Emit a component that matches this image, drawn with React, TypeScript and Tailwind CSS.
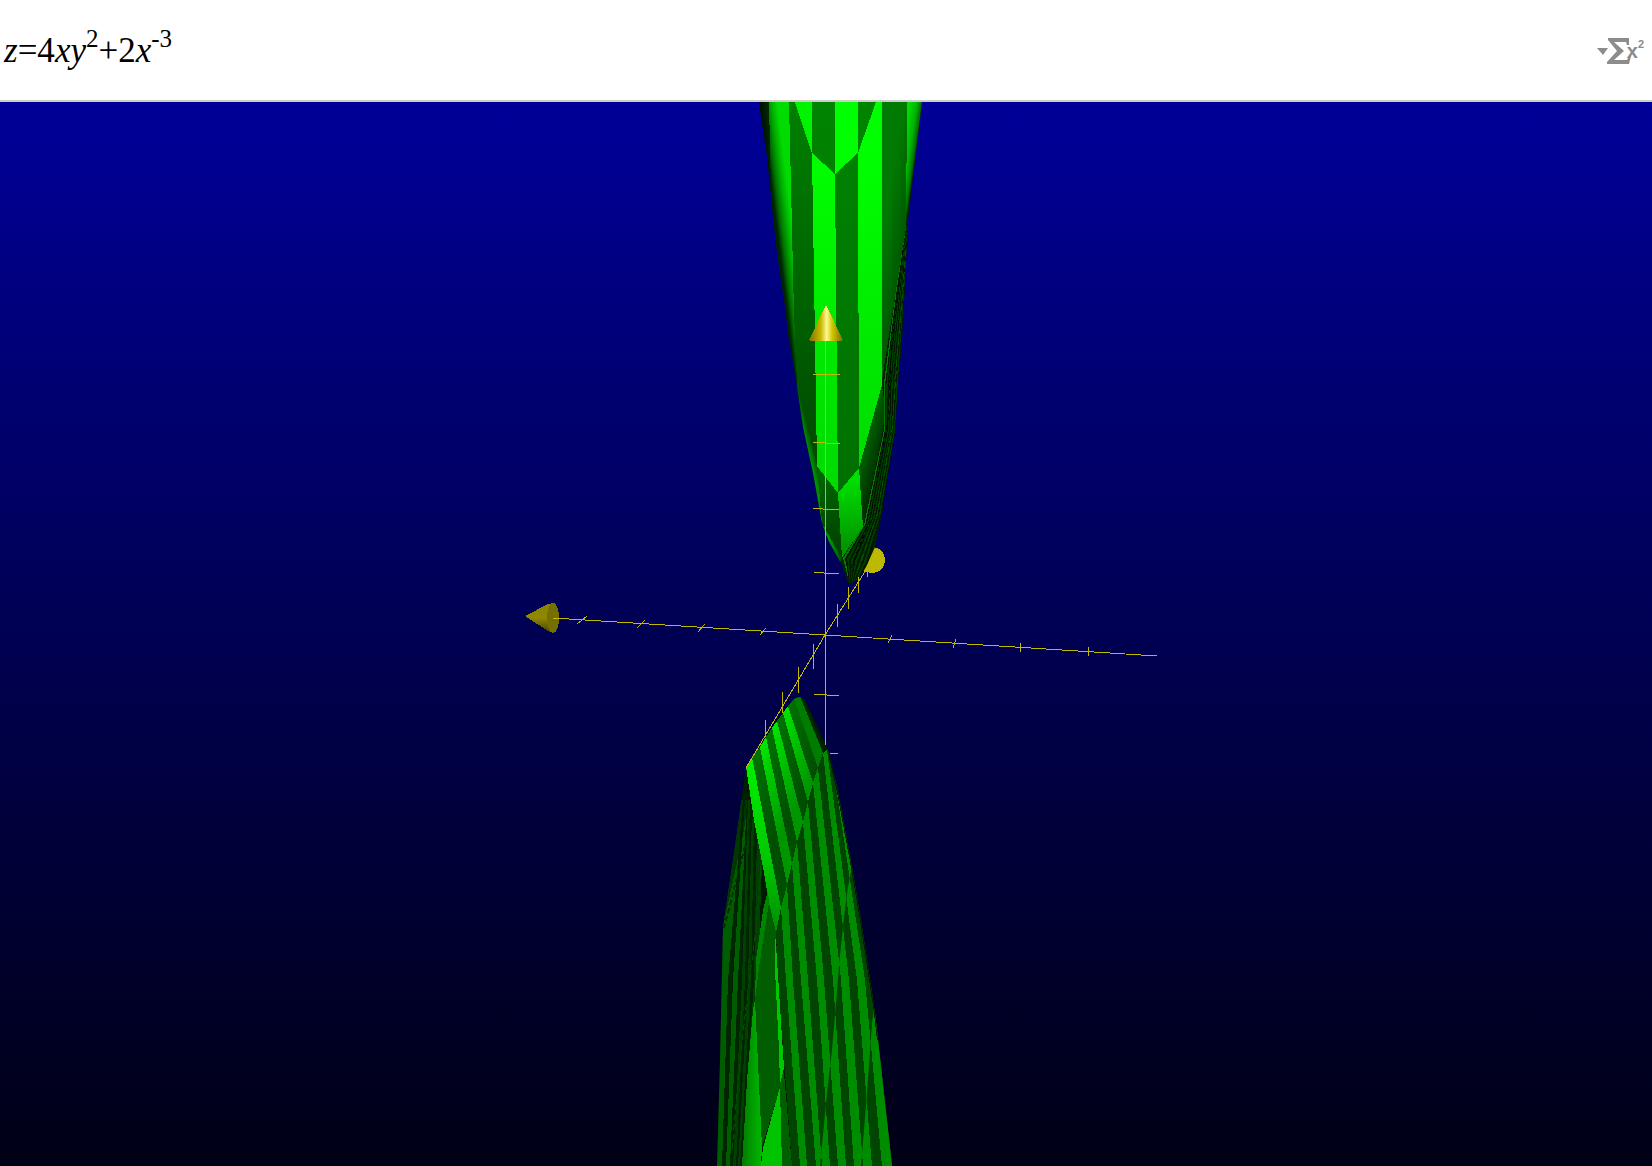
import React from "react";

type Pt = [number, number];

const pts = (list: Pt[]) => list.map((p) => p.join(",")).join(" ");

const BRIGHT = "#008c00";
const DARK = "#004600";

const UPPER: Pt[] = [
  [759, 102], [767, 155], [772, 205], [777, 252], [786, 313], [788, 333], [796, 380],
  [803, 427], [813, 473], [822, 523], [828, 540], [842, 565], [848, 583], [853, 583],
  [860, 577], [866, 567], [875, 547], [882, 513], [888, 473], [895, 433], [898, 383],
  [902, 340], [905, 285], [908, 218], [922, 102],
];

const LOWER: Pt[] = [
  [796, 698], [800, 697], [805, 700], [825, 743], [829, 753], [837, 787], [852, 867], [862, 927],
  [875, 1013], [885, 1103], [892, 1166], [717, 1166], [720, 1060], [723, 927], [736, 840],
  [746, 767], [765, 737], [782, 713], [794, 699],
];

/* Shaded underside of the upper sheet: left and right rims of the fan of strips. */
const rimLeft: Pt[] = [[906, 227], [896, 290], [884, 383], [884, 430], [864, 525], [843, 558], [848, 578]];
const rimRight: Pt[] = [[909, 218], [905, 290], [899, 383], [896, 430], [882, 513], [868, 563], [856, 583]];
const FAN = 12;
const fan = Array.from({ length: FAN }, (_, i) => {
  const at = (t: number) =>
    rimLeft.map((l, k): Pt => [l[0] + (rimRight[k][0] - l[0]) * t, l[1] + (rimRight[k][1] - l[1]) * t]);
  return [...at(i / FAN), ...at((i + 1) / FAN).reverse()];
});

/* Strips of the lit face of the lower sheet. */
const litTop: Pt[] = [
  [746, 767], [752, 757], [760, 747], [766, 737], [772, 728], [777, 721], [783, 713], [788, 706], [794, 698], [800, 696],
];
const litEnd: Pt[] = [
  [776, 932], [781, 908], [787, 885], [792, 863], [797, 842], [803, 822], [808, 802], [813, 783], [818, 768], [823, 753],
];

/* Edges of the long strips: start point, x at y=980, x at y=1166. */
const edges: [number, number, number, number][] = [
  [776, 932, 778, 792], [781, 908, 786, 800], [787, 885, 793, 807], [792, 863, 801, 816],
  [797, 842, 808, 822], [803, 822, 817, 830], [808, 802, 824, 838], [813, 783, 833, 846],
  [818, 768, 841, 854], [823, 753, 849, 863], [827, 750, 857, 872], [831, 753, 865, 882], [840, 780, 873, 893],
];
const longStrips = edges.slice(0, -1).map((a, i): Pt[] => {
  const b = edges[i + 1];
  return [[a[0], a[1]], [b[0], b[1]], [b[2], 980], [b[3], 1166], [a[3], 1166], [a[2], 980]];
});

const LongStrips = ({ odd, even }: { odd: string; even: string }) => (
  <>
    {longStrips.map((s, i) => (
      <polygon key={i} points={pts(s)} fill={i % 2 ? odd : even} />
    ))}
  </>
);

/* Strips on the shaded left side of the lower sheet. */
const sideEdges: [number, number, number, number][] = [
  [733, 800, 710, 710], [743, 800, 728, 722], [745, 800, 733, 726], [747, 800, 738, 730], [748, 800, 742, 733],
  [750, 800, 745, 736], [752, 810, 748, 738], [754, 820, 751, 740], [757, 835, 754, 742], [762, 860, 758, 743],
];
const sideStrips = sideEdges.slice(0, -1).map((a, i): Pt[] => {
  const b = sideEdges[i + 1];
  return [[a[0], a[1]], [b[0], b[1]], [b[2], 980], [b[3], 1166], [a[3], 1166], [a[2], 980]];
});

const ticks: [number, number, number, number][] = [
  [813, 374, 840, 374], [813, 442, 826, 442], [826, 443, 840, 443], [813, 508, 823, 508], [823, 509, 839, 509],
  [814, 572, 824, 572], [824, 573, 839, 573], [814, 694, 827, 694], [827, 695, 839, 695], [830, 753, 838, 753],
  [837, 604, 837, 627], [848, 587, 848, 609], [858, 577, 858, 593], [867, 570, 867, 577],
  [813, 644, 813, 669], [798, 667, 798, 693], [782, 692, 782, 713], [765, 720, 765, 737],
  [577, 624, 587, 616], [637, 628, 645, 620], [698, 632, 705, 624], [760, 635, 766, 628],
  [888, 643, 892, 635], [953, 648, 956, 639], [1020, 652, 1021, 643], [1088, 647, 1088, 656],
];

function Surface() {
  return (
    <svg
      viewBox="0 102 1652 1064"
      preserveAspectRatio="xMidYMid slice"
      className="block h-full w-full"
      shapeRendering="crispEdges"
      role="img"
      aria-label="3D graph of z = 4xy² + 2x⁻³"
    >
      <defs>
        <linearGradient id="leftRim" gradientUnits="userSpaceOnUse" x1="762" y1="110" x2="778" y2="108">
          <stop offset="0" stopColor="#002400" />
          <stop offset="0.3" stopColor="#007400" />
          <stop offset="0.65" stopColor="#00b000" />
          <stop offset="1" stopColor="#00dc00" />
        </linearGradient>
        <linearGradient id="leftEdge" gradientUnits="userSpaceOnUse" x1="759" y1="110" x2="771" y2="109">
          <stop offset="0" stopColor="#000800" />
          <stop offset="1" stopColor="#003400" />
        </linearGradient>
        <linearGradient id="darkA" gradientUnits="userSpaceOnUse" x1="0" y1="102" x2="0" y2="460">
          <stop offset="0" stopColor="#008000" />
          <stop offset="1" stopColor="#004a00" />
        </linearGradient>
        <linearGradient id="darkB" gradientUnits="userSpaceOnUse" x1="0" y1="102" x2="0" y2="490">
          <stop offset="0" stopColor="#008400" />
          <stop offset="1" stopColor="#007000" />
        </linearGradient>
        <linearGradient id="litA" gradientUnits="userSpaceOnUse" x1="0" y1="150" x2="0" y2="490">
          <stop offset="0" stopColor="#00ff00" />
          <stop offset="1" stopColor="#00da00" />
        </linearGradient>
        <linearGradient id="rightDark" gradientUnits="userSpaceOnUse" x1="882" y1="240" x2="906" y2="244">
          <stop offset="0" stopColor="#007a00" />
          <stop offset="1" stopColor="#005600" />
        </linearGradient>
        <linearGradient id="rightLit" gradientUnits="userSpaceOnUse" x1="907" y1="120" x2="921" y2="122">
          <stop offset="0" stopColor="#00dc00" />
          <stop offset="0.5" stopColor="#00b400" />
          <stop offset="0.85" stopColor="#007000" />
          <stop offset="1" stopColor="#001c00" />
        </linearGradient>
        <linearGradient id="fold" gradientUnits="userSpaceOnUse" x1="862" y1="465" x2="880" y2="470">
          <stop offset="0" stopColor="#005c00" />
          <stop offset="1" stopColor="#002400" />
        </linearGradient>
        <linearGradient id="facet" gradientUnits="userSpaceOnUse" x1="845" y1="480" x2="855" y2="550">
          <stop offset="0" stopColor="#00e000" />
          <stop offset="1" stopColor="#009000" />
        </linearGradient>
        <linearGradient id="facetDark" gradientUnits="userSpaceOnUse" x1="820" y1="480" x2="836" y2="555">
          <stop offset="0" stopColor="#006400" />
          <stop offset="1" stopColor="#004000" />
        </linearGradient>
        <linearGradient id="sliver" gradientUnits="userSpaceOnUse" x1="805" y1="437" x2="813" y2="435">
          <stop offset="0" stopColor="#009000" />
          <stop offset="1" stopColor="#002c00" />
        </linearGradient>
        <linearGradient id="litFace" gradientUnits="userSpaceOnUse" x1="755" y1="760" x2="806" y2="790">
          <stop offset="0" stopColor="#00e400" />
          <stop offset="1" stopColor="#009600" />
        </linearGradient>
        <linearGradient id="litFaceDark" gradientUnits="userSpaceOnUse" x1="755" y1="760" x2="806" y2="790">
          <stop offset="0" stopColor="#007200" />
          <stop offset="1" stopColor="#004e00" />
        </linearGradient>
        <linearGradient id="litFirst" gradientUnits="userSpaceOnUse" x1="0" y1="770" x2="0" y2="932">
          <stop offset="0" stopColor="#00ec00" />
          <stop offset="0.6" stopColor="#00c400" />
          <stop offset="1" stopColor="#008c00" />
        </linearGradient>
        <linearGradient id="apexShade" gradientUnits="userSpaceOnUse" x1="802" y1="722" x2="814" y2="717">
          <stop offset="0" stopColor="#005000" />
          <stop offset="1" stopColor="#001800" />
        </linearGradient>
        <linearGradient id="bottomLit" gradientUnits="userSpaceOnUse" x1="742" y1="1110" x2="760" y2="1110">
          <stop offset="0" stopColor="#007c00" />
          <stop offset="1" stopColor="#00b400" />
        </linearGradient>
        <linearGradient id="coneUp" x1="0" y1="0" x2="1" y2="0">
          <stop offset="0" stopColor="#807000" />
          <stop offset="0.35" stopColor="#c8b800" />
          <stop offset="0.52" stopColor="#fff890" />
          <stop offset="0.68" stopColor="#d0c800" />
          <stop offset="1" stopColor="#806800" />
        </linearGradient>
        <linearGradient id="coneSide" x1="0" y1="0" x2="0" y2="1">
          <stop offset="0" stopColor="#8c8400" />
          <stop offset="0.5" stopColor="#908800" />
          <stop offset="1" stopColor="#484000" />
        </linearGradient>
        <clipPath id="upperClip"><polygon points={pts(UPPER)} /></clipPath>
        <clipPath id="lowerClip"><polygon points={pts(LOWER)} /></clipPath>
        <clipPath id="faceThree"><polygon points="852,867 848,887 844,917 839,965 836,1003 832,1050 827,1093 820,1166 900,1166 900,867" /></clipPath>
        <clipPath id="faceFour"><polygon points="874,1010 872,1023 867,1093 861,1166 900,1166 900,1010" /></clipPath>
      </defs>

      <circle cx="872" cy="560" r="13" fill="#bdb800" />

      <g clipPath="url(#upperClip)">
        <rect x="750" y="102" width="180" height="490" fill="#002200" />
        <polygon points="759,102 790,102 794,313 797,383 780,383" fill="url(#leftRim)" />
        <polygon points="759,102 769,102 771,190 766,190" fill="url(#leftEdge)" />
        <polygon points="789,102 812,102 812,152 817,465 797,383 794,313" fill="url(#darkA)" />
        <polygon points="795,102 812,102 812,153" fill="#00f400" />
        <polygon points="812,102 835,102 835,174 812,153" fill="url(#darkB)" />
        <polygon points="812,153 835,174 838,493 817,466" fill="url(#litA)" />
        <polygon points="835,102 858,102 858,153 835,174" fill="#00ff00" />
        <polygon points="835,174 858,153 860,468 838,493" fill="url(#darkB)" />
        <polygon points="858,102 882,102 882,385 859,468 858,153" fill="url(#litA)" />
        <polygon points="858,102 876,102 858,153" fill="#008400" />
        <polygon points="882,102 907,102 906,227 882,380" fill="url(#rightDark)" />
        <polygon points="907,102 923,102 910,210 906,227" fill="url(#rightLit)" />
        <polygon points="797,383 817,465 822,523 842,558 838,566 790,440" fill="url(#sliver)" />
        <polygon points="817,466 838,493 842,558 822,522" fill="url(#facetDark)" />
        <polygon points="838,493 859,468 863,527 842,558" fill="url(#facet)" />
        <polygon points="882,385 885,407 883,430 863,527 859,468" fill="url(#fold)" />
        {fan.map((s, i) => (
          <polygon key={i} points={pts(s)} fill={i % 2 ? "#001a00" : i === 0 ? "#007c00" : "#003c00"} />
        ))}
        <polyline points="903,250 892,340 888,420 870,520 850,570" fill="none" stroke="#000c00" strokeDasharray="5 3" />
        <polyline points="906,250 897,360 892,430 877,515 857,573" fill="none" stroke="#005400" strokeDasharray="7 4" />
      </g>

      <g clipPath="url(#lowerClip)">
        <rect x="710" y="690" width="190" height="476" fill="#001c00" />
        {sideStrips.map((s, i) => (
          <polygon key={i} points={pts(s)} fill={i % 2 ? "#002600" : i < 4 ? "#005c00" : "#004000"} />
        ))}
        <polygon points="746,767 748,800 744,830 723,927 736,840" fill="#002000" opacity="0.6" />
        <polyline points="753,815 741,862 730,905 724,928" fill="none" stroke="#003000" strokeWidth="2" strokeDasharray="5 3" />
        <polyline points="761,865 756,930 748,990 740,1060 732,1150" fill="none" stroke="#005000" strokeDasharray="6 4" />

        <LongStrips odd={BRIGHT} even={DARK} />
        <g clipPath="url(#faceThree)"><LongStrips odd={DARK} even={BRIGHT} /></g>
        <g clipPath="url(#faceFour)"><LongStrips odd={BRIGHT} even={DARK} /></g>
        <polyline points="831,753 839,787 854,867 864,927 877,1013 880,1040" fill="none" stroke="#001c00" strokeWidth="6" />

        <polygon points="800,697 808,700 826,743 823,753" fill="url(#apexShade)" />
        {litTop.slice(0, -1).map((a, i) => (
          <polygon
            key={i}
            points={pts([a, litTop[i + 1], litEnd[i + 1], litEnd[i]])}
            fill={i === 0 ? "url(#litFirst)" : i === 8 ? "#007c00" : i % 2 ? "url(#litFaceDark)" : "url(#litFace)"}
          />
        ))}
        <polygon points="746,767 752,757 781,908 776,932 769,903 764,873 754,820" fill="url(#litFirst)" />

        <polygon points="768,890 769,903 760,960 755,1000 756,960 763,910" fill="#008400" />
        <polygon points="769,903 776,932 777,960 780,1060 784,1075 762,1147 755,1000 760,960" fill="#005e00" />
        <polygon points="775,932 777,960 784,1068 780,1084 779,1050 775,970" fill="#00c800" />
        <polygon points="755,1000 762,1147 761,1166 742,1166 747,1080 753,1010" fill="url(#bottomLit)" />
        <polygon points="784,1073 792,1166 781,1166 780,1087" fill="#006000" />
        <polygon points="780,1087 782,1166 761,1166 763,1148" fill="#00c400" />
      </g>

      <g stroke="#c4b800" strokeWidth="1" fill="none">
        <line x1="553" y1="618" x2="825" y2="635" />
        <line x1="825" y1="635" x2="1157" y2="656" />
        <line x1="746" y1="768" x2="825" y2="635" />
        <line x1="825" y1="635" x2="866" y2="570" />
        <rect x="825" y="341" width="1" height="404" fill="#c4b800" stroke="none" />
        {ticks.map(([x1, y1, x2, y2], i) => {
          const dx = x1 === x2 ? 0.5 : 0;
          const dy = y1 === y2 ? 0.5 : 0;
          return <line key={i} x1={x1 + dx} y1={y1 + dy} x2={x2 + dx} y2={y2 + dy} />;
        })}
      </g>

      <polygon points="826,305 843,340 841,341 811,341 809,340" fill="url(#coneUp)" />
      <polygon points="525,616 548,604 554,603 553,633 548,631" fill="url(#coneSide)" />
      <ellipse cx="553" cy="618" rx="6" ry="15" fill="#747000" />
      <line x1="553" y1="618" x2="560" y2="618" stroke="#c4b800" />
    </svg>
  );
}

export default function App() {
  return (
    <div className="flex h-screen flex-col bg-white">
      <header className="flex h-[102px] shrink-0 items-center justify-between border-b-2 border-[#cccccc] pt-[2px] pr-2 pl-1">
        <div
          role="math"
          className="font-['Liberation_Serif',serif] text-[35px] leading-[40px] whitespace-nowrap text-black"
        >
          <i>z</i>=4<i>xy</i>
          <sup className="-top-[15px] text-[25px] leading-none">2</sup>+2<i>x</i>
          <sup className="-top-[15px] text-[25px] leading-none">-3</sup>
        </div>
        <button type="button" aria-label="Formula menu" className="flex items-center text-[#8c8c8c]">
          <svg width="34" height="28" viewBox="0 0 34 28" fill="currentColor" aria-hidden="true">
            <path d="M0 11h11l-5 7z" />
            <path d="M11 1h21v7h-2l-1-3H17l10 9-10 9h13l2-4h2l-2 8H10v-2l10-11L11 3z" />
          </svg>
          <span className="-ml-[4px] font-['Liberation_Sans',sans-serif] text-[20px] leading-none font-bold">
            x<sup className="-top-[10px] text-[11px] leading-none">2</sup>
          </span>
        </button>
      </header>
      <main className="min-h-0 flex-1 bg-linear-to-b from-[#000099] to-[#000016]">
        <Surface />
      </main>
    </div>
  );
}
